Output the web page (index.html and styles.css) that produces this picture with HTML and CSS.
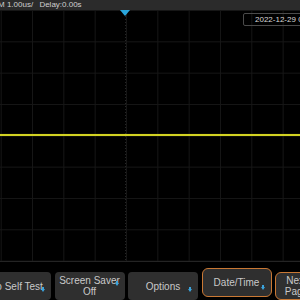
FILE: index.html
```html
<!DOCTYPE html>
<html>
<head>
  <meta charset="UTF-8">
  <title>Scope Utility Menu</title>
  <link rel="stylesheet" href="styles.css">
</head>
<body>
  <div class="scope">
    <div class="topbar">
      <span class="timebase">M 1.00us/</span>
      <span class="delay">Delay:0.00s</span>
    </div>
    <div class="screen">
      <div class="grid"></div>
      <div class="center-v"></div>
      <div class="trigger"></div>
      <div class="trace"></div>
      <div class="clock">2022-12-29 09:41:07</div>
    </div>
    <div class="menu">
      <div class="softkey">Do Self Test<span class="arrow"></span></div>
      <div class="softkey two-line">Screen Saver<br>Off<span class="arrow"></span></div>
      <div class="softkey">Options<span class="arrow"></span></div>
      <div class="softkey active">Date/Time<span class="arrow"></span></div>
      <div class="softkey two-line next"><span class="next-label">Next<br>Page</span></div>
    </div>
  </div>
</body>
</html>
```

FILE: styles.css
```css
body {
  margin: 0;
  background: #000;
  font-family: "Liberation Sans", Arial, sans-serif;
  overflow: hidden;
}
.scope {
  width: 300px;
  height: 300px;
  overflow: hidden;
  display: flex;
  flex-direction: column;
}
.topbar {
  height: 10px;
  background: #2b2b2b;
  color: #cfcfcf;
  font-size: 8px;
  line-height: 9px;
  white-space: nowrap;
  text-indent: -2px;
}
.delay {
  margin-left: 4px;
}
.screen {
  position: relative;
  height: 251px;
  border-bottom: 1px solid #242424;
}
.grid {
  position: absolute;
  top: 0;
  bottom: 0;
  left: 0;
  width: 360px;
  background-image:
    linear-gradient(to right, #161616 1px, transparent 1px),
    linear-gradient(to bottom, #161616 1px, transparent 1px);
  background-size: 31.33px 31.33px;
  background-position: 0.7px 0;
}
.center-v {
  position: absolute;
  top: 0;
  bottom: 0;
  left: 125px;
  width: 1px;
  background-image: linear-gradient(to bottom, #262626 50%, transparent 50%);
  background-size: 1px 3px;
}
.trigger {
  position: absolute;
  top: 0;
  left: 120px;
  width: 0;
  height: 0;
  border-left: 5px solid transparent;
  border-right: 5px solid transparent;
  border-top: 6px solid #2aa6dc;
}
.trace {
  position: absolute;
  top: 124px;
  left: 0;
  right: 0;
  height: 2px;
  background: #d2d222;
  box-shadow: 0 0 1px #6e6e10;
}
.clock {
  position: absolute;
  top: 3px;
  left: 243px;
  height: 11px;
  padding: 0 11px;
  border: 1px solid #4a4a4a;
  border-radius: 2px;
  color: #d8d8d8;
  font-size: 8px;
  line-height: 11px;
  white-space: nowrap;
}
.menu {
  flex: 1;
  display: flex;
  gap: 3.5px;
  margin-left: -19px;
  align-items: flex-start;
  padding-top: 10px;
}
.softkey {
  position: relative;
  flex: 0 0 70px;
  height: 28px;
  box-sizing: border-box;
  background: #2f2f2f;
  border-radius: 4px;
  color: #c9c9c9;
  font-size: 10px;
  line-height: 11px;
  text-align: center;
  white-space: nowrap;
  display: flex;
  align-items: center;
  justify-content: center;
}
.two-line {
  line-height: 11.5px;
}
.active {
  margin-top: -4px;
  height: 29px;
  border: 1.5px solid #c97834;
  border-radius: 6px;
}
.next {
  border: 1.5px solid #c97834;
  border-radius: 6px;
  justify-content: flex-start;
  padding-left: 7px;
}
.next-label {
  width: 27px;
}
.arrow {
  position: absolute;
  right: 6px;
  bottom: 8px;
  width: 0;
  height: 0;
  border-left: 2px solid transparent;
  border-right: 2px solid transparent;
  border-top: 3px solid #3ba3dc;
}
.arrow::before {
  content: "";
  position: absolute;
  left: -1px;
  top: -5px;
  width: 2px;
  height: 2px;
  background: #3ba3dc;
}
.two-line .arrow {
  bottom: 14px;
}
.active .arrow {
  bottom: 6px;
}
```
